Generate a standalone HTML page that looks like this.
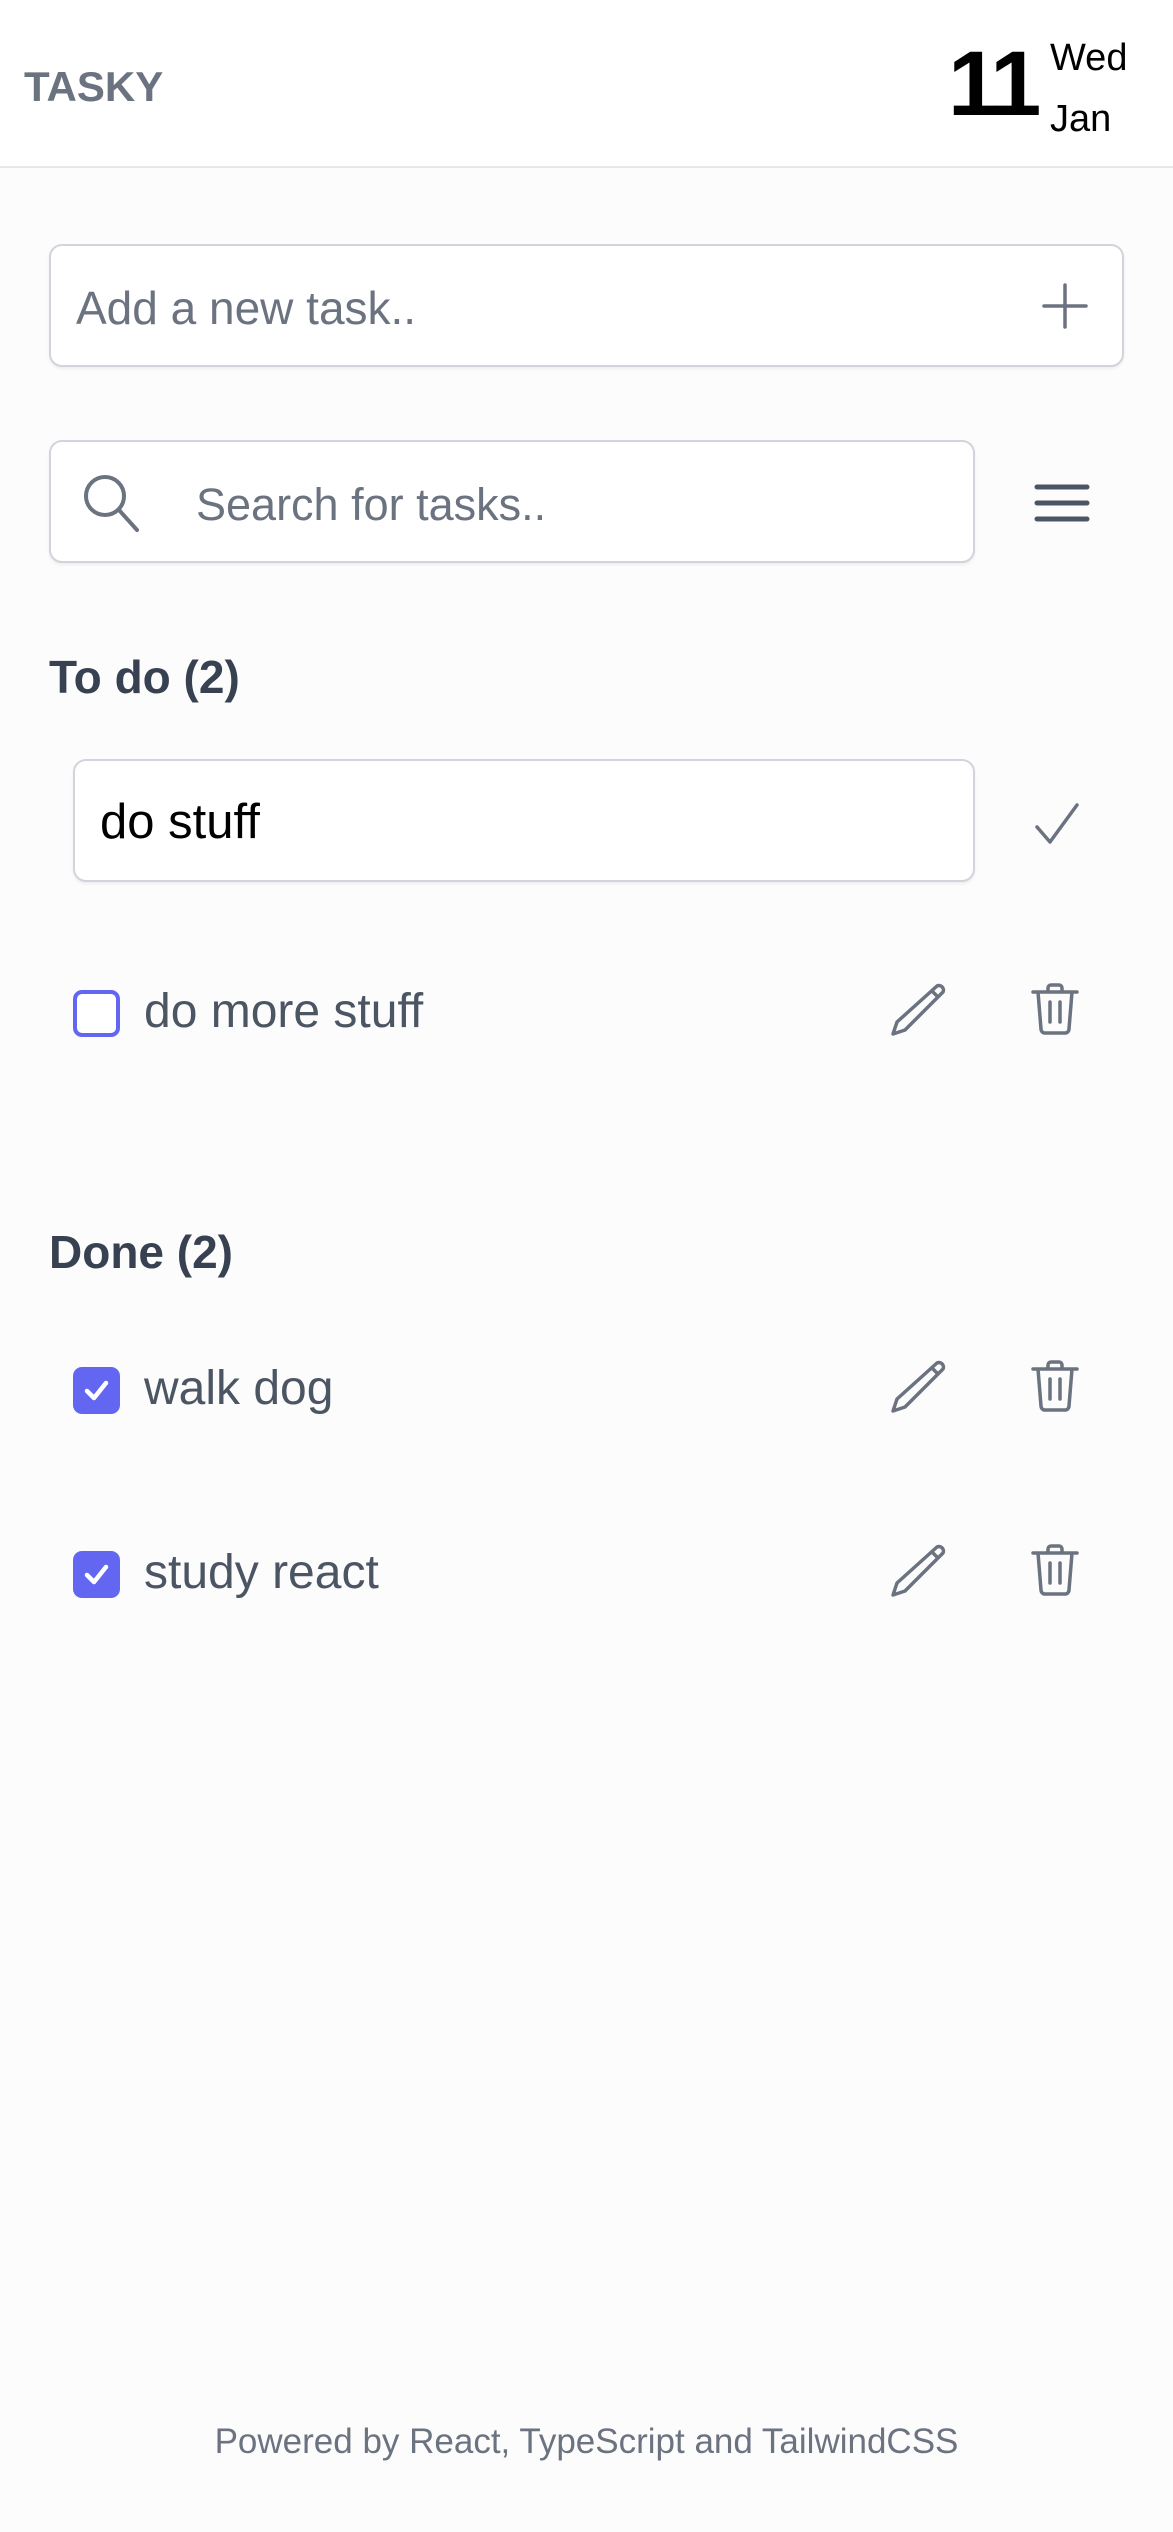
<!DOCTYPE html>
<html><head><meta charset="utf-8"><style>
*{box-sizing:border-box;margin:0;padding:0}
body{width:1173px;height:2532px;background:#fcfcfc;font-family:"Liberation Sans",sans-serif;position:relative;overflow:hidden}
.abs{position:absolute}
header{position:absolute;left:0;top:0;width:1173px;height:168px;background:#fff;border-bottom:2px solid #e5e7eb}
.box{position:absolute;background:#fff;border:2px solid #d1d5db;border-radius:13px;box-shadow:0 2px 3px rgba(0,0,0,.06)}
.ph{color:#6b7280;font-size:45px}
.h{font-size:46px;font-weight:bold;color:#374151}
.txt{font-size:48px;color:#4b5563}
.cb{position:absolute;left:73px;width:47px;height:47px;border-radius:9px}
.cb.off{border:4px solid #6366f1;background:#fff}
.cb.on{background:#6366f1}
</style></head><body>
<header>
<div class="abs" style="left:24px;top:63px;font-size:42px;font-weight:bold;color:#6b7280">TASKY</div>
<div class="abs" style="left:948px;top:38px;font-size:92px;font-weight:bold;color:#000;letter-spacing:-4px;line-height:1">11</div>
<div class="abs" style="left:1050px;top:39px;font-size:38px;color:#000;line-height:1">Wed</div>
<div class="abs" style="left:1050px;top:100px;font-size:38px;color:#000;line-height:1">Jan</div>
</header>

<div class="box" style="left:49px;top:244px;width:1075px;height:123px">
<div class="abs ph" style="left:25px;top:35px;font-size:46px">Add a new task..</div>
<svg class="abs" style="left:990px;top:36px" width="48" height="48" viewBox="0 0 48 48"><path d="M24 3V45M3 24H45" stroke="#6b7280" stroke-width="3.5" stroke-linecap="round"/></svg>
</div>

<div class="box" style="left:49px;top:440px;width:926px;height:123px">
<svg class="abs" style="left:30px;top:30px" width="62" height="62" viewBox="0 0 62 62"><circle cx="24" cy="24" r="19" fill="none" stroke="#6b7280" stroke-width="4"/><path d="M38 38L56 58" stroke="#6b7280" stroke-width="4" stroke-linecap="round"/></svg>
<div class="abs ph" style="left:145px;top:37px">Search for tasks..</div>
</div>
<svg class="abs" style="left:1034px;top:482px" width="56" height="42" viewBox="0 0 56 42"><path d="M3 5H53M3 21H53M3 37H53" stroke="#4b5563" stroke-width="5" stroke-linecap="round"/></svg>

<div class="abs h" style="left:49px;top:650px">To do (2)</div>

<div class="box" style="left:73px;top:759px;width:902px;height:123px">
<div class="abs" style="left:25px;top:33px;font-size:49px;color:#000">do stuff</div>
</div>
<svg class="abs" style="left:1034px;top:801px" width="46" height="46" viewBox="0 0 46 46"><path d="M3 26L16 41L43 4" fill="none" stroke="#6b7280" stroke-width="3.5" stroke-linecap="round" stroke-linejoin="round"/></svg>

<div class="cb off" style="top:990px"></div>
<div class="abs txt" style="left:144px;top:984px">do more stuff</div>

<div class="abs h" style="left:49px;top:1225px">Done (2)</div>

<div class="cb on" style="top:1367px"><svg width="47" height="47" viewBox="0 0 47 47"><path d="M14 24L21 31L33 16" fill="none" stroke="#fff" stroke-width="4.5" stroke-linecap="round" stroke-linejoin="round"/></svg></div>
<div class="abs txt" style="left:144px;top:1361px">walk dog</div>

<div class="cb on" style="top:1551px"><svg width="47" height="47" viewBox="0 0 47 47"><path d="M14 24L21 31L33 16" fill="none" stroke="#fff" stroke-width="4.5" stroke-linecap="round" stroke-linejoin="round"/></svg></div>
<div class="abs txt" style="left:144px;top:1545px">study react</div>

<svg width="0" height="0" style="position:absolute"><defs>
<g id="pen"><path d="M46 4a4.5 4.5 0 0 1 6 6L14 48L2 52L6 40Z M41 9L47 15" fill="none" stroke="#6b7280" stroke-width="3.5" stroke-linejoin="round" stroke-linecap="round"/></g>
<g id="trash"><path d="M2 10H46M17 10V6a3 3 0 0 1 3-3h8a3 3 0 0 1 3 3v4M7 10L10 47a4 4 0 0 0 4 4h20a4 4 0 0 0 4-4L41 10M19 20V40M29 20V40" fill="none" stroke="#6b7280" stroke-width="3.5" stroke-linecap="round" stroke-linejoin="round"/></g>
</defs></svg>
<svg class="abs" style="left:891px;top:982px" width="56" height="56" viewBox="0 0 56 56"><use href="#pen"/></svg>
<svg class="abs" style="left:1031px;top:982px" width="48" height="56" viewBox="0 0 48 56"><use href="#trash"/></svg>
<svg class="abs" style="left:891px;top:1359px" width="56" height="56" viewBox="0 0 56 56"><use href="#pen"/></svg>
<svg class="abs" style="left:1031px;top:1359px" width="48" height="56" viewBox="0 0 48 56"><use href="#trash"/></svg>
<svg class="abs" style="left:891px;top:1543px" width="56" height="56" viewBox="0 0 56 56"><use href="#pen"/></svg>
<svg class="abs" style="left:1031px;top:1543px" width="48" height="56" viewBox="0 0 48 56"><use href="#trash"/></svg>

<div class="abs" style="left:0;width:1173px;top:2422px;text-align:center;font-size:35px;color:#6b7280">Powered by React, TypeScript and TailwindCSS</div>
</body></html>
